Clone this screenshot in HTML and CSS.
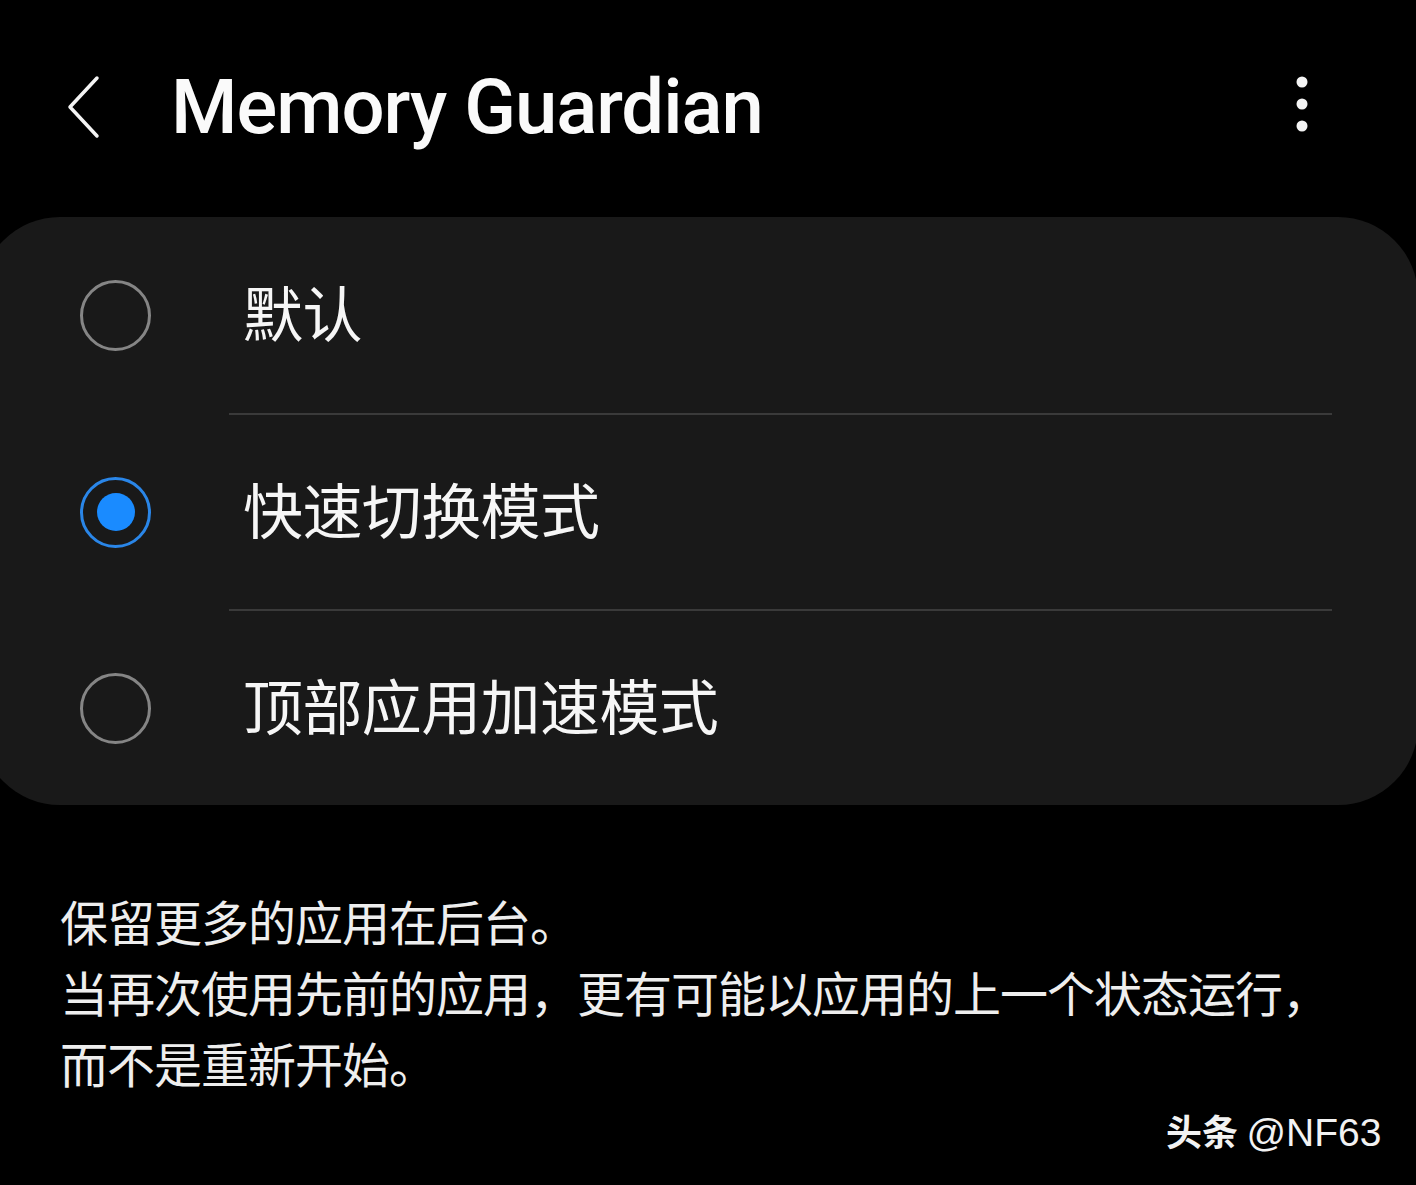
FILE: index.html
```html
<!DOCTYPE html>
<html lang="zh-CN">
<head>
<meta charset="utf-8">
<title>Memory Guardian</title>
<link rel="stylesheet" href="styles.css">
</head>
<body>
<div class="screen">
  <header class="topbar">
    <div class="back">
      <svg width="40" height="64" viewBox="0 0 40 64"><path d="M34 3 L7 32 L34 61" fill="none" stroke="#f4f4f4" stroke-width="3.5" stroke-linecap="round" stroke-linejoin="round"/></svg>
    </div>
    <h1 class="title">Memory Guardian</h1>
    <div class="more">
      <svg width="24" height="60" viewBox="0 0 24 60"><circle cx="12" cy="8" r="5.5" fill="#f4f4f4"/><circle cx="12" cy="30" r="5.5" fill="#f4f4f4"/><circle cx="12" cy="52" r="5.5" fill="#f4f4f4"/></svg>
    </div>
  </header>

  <section class="card">
    <div class="row first">
      <span class="radio"></span>
      <span class="label">默认</span>
    </div>
    <div class="divider"></div>
    <div class="row">
      <span class="radio checked"><span class="dot"></span></span>
      <span class="label">快速切换模式</span>
    </div>
    <div class="divider"></div>
    <div class="row">
      <span class="radio"></span>
      <span class="label">顶部应用加速模式</span>
    </div>
  </section>

  <p class="desc">保留更多的应用在后台。<br>当再次使用先前的应用，更有可能以应用的上一个状态运行，<br>而不是重新开始。</p>

  <div class="watermark"><b>头条</b> <span class="handle">@NF63</span></div>
</div>
</body>
</html>
```

FILE: styles.css
```css
html, body {
  margin: 0;
  padding: 0;
  background: #000;
}
body {
  width: 1416px;
  height: 1185px;
  overflow: hidden;
  font-family: "Noto Sans CJK SC", "Noto Sans", sans-serif;
  color: #f5f5f5;
}
.screen {
  position: relative;
  width: 1416px;
  height: 1185px;
}
.topbar {
  display: flex;
  align-items: center;
  height: 217px;
  box-sizing: border-box;
  padding-bottom: 4px;
}
.back {
  width: 40px;
  height: 64px;
  margin-left: 63px;
}
.back svg, .more svg { display: block; }
.title {
  margin: 0 0 0 68px;
  font-family: Roboto, "Noto Sans", sans-serif;
  font-weight: 500;
  font-size: 76px;
  line-height: 76px;
  letter-spacing: -1px;
  color: #fafafa;
  flex: 1;
}
.more {
  width: 24px;
  height: 60px;
  margin-right: 102px;
  margin-top: -6px;
}
.card {
  margin: 0 -2px 0 -20px;
  background: #191919;
  border-radius: 80px;
  display: flex;
  flex-direction: column;
}
.row {
  display: flex;
  align-items: center;
  height: 194px;
  padding-left: 100px;
}
.row.first { height: 196px; }
.radio {
  width: 71px;
  height: 71px;
  box-sizing: border-box;
  border: 3.5px solid #858585;
  border-radius: 50%;
  display: flex;
  align-items: center;
  justify-content: center;
  flex: none;
}
.radio.checked {
  border-color: #2a86e8;
}
.dot {
  width: 38px;
  height: 38px;
  border-radius: 50%;
  background: #1a8bff;
}
.label {
  margin-left: 92px;
  margin-bottom: 8px;
  font-size: 60px;
  line-height: 1;
  color: #f6f6f6;
  letter-spacing: -0.6px;
}
.divider {
  height: 2px;
  background: #3a3a3a;
  margin: 0 86px 0 249px;
}
.desc {
  margin: 80px 0 0 60px;
  font-size: 48px;
  line-height: 71px;
  color: #eeeeee;
  letter-spacing: -1px;
}
.watermark {
  position: absolute;
  left: 1166px;
  top: 1108px;
  font-size: 38px;
  line-height: 44px;
  color: #f2f2f2;
  white-space: nowrap;
  text-shadow: 0 0 2px rgba(0,0,0,0.6);
}
.watermark b {
  font-family: "Noto Sans CJK SC", sans-serif;
  font-weight: 700;
  font-size: 36px;
}
.handle {
  font-family: "Liberation Sans", Arial, sans-serif;
  font-size: 39px;
}
```
